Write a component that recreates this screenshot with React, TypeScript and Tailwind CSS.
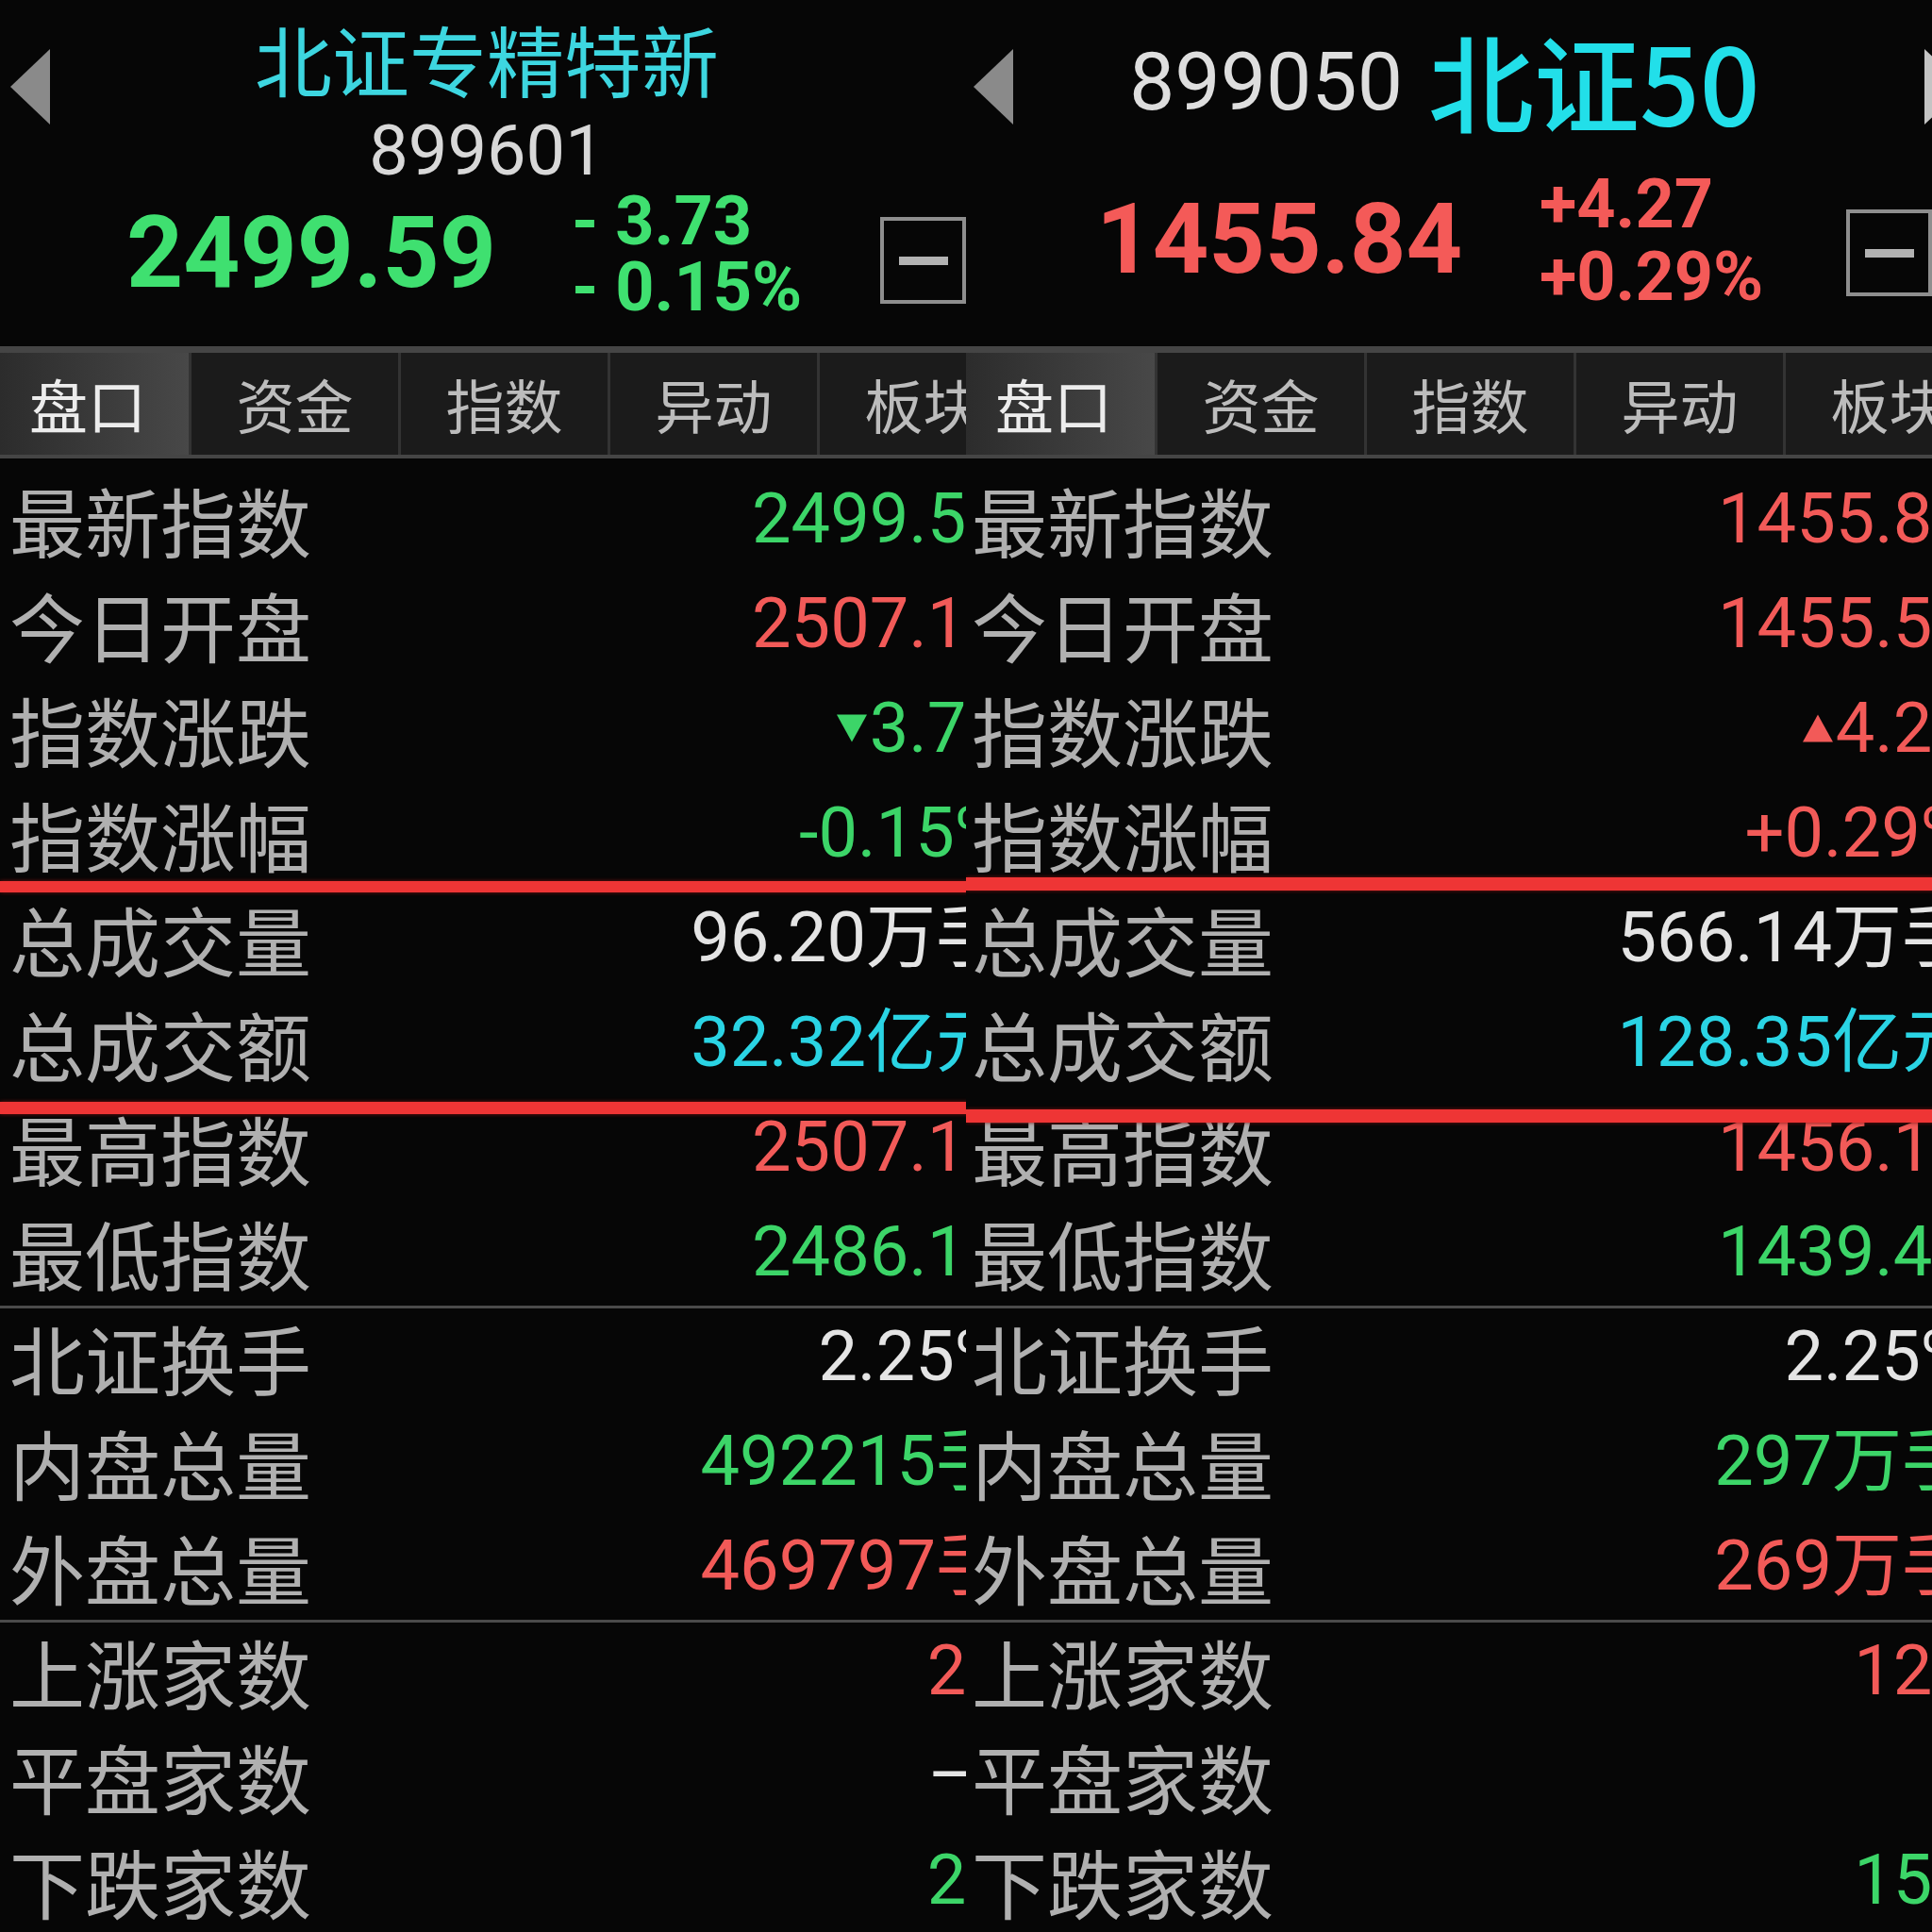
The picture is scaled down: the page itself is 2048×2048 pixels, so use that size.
import React from "react"

const cjk = "font-['Noto_Sans_CJK_SC',sans-serif]"
const num = "font-['Roboto','Noto_Sans_CJK_SC',sans-serif]"

const GREEN = "text-[#3cd568]"
const RED = "text-[#f25a58]"
const CYAN = "text-[#2ad4e4]"
const WHITE = "text-[#e4e4e4]"

type Row = { label: string; value: string; color: string; arrow?: "up" | "down"; extra?: string }

const leftRows: Row[] = [
  { label: "最新指数", value: "2499.59", color: GREEN },
  { label: "今日开盘", value: "2507.18", color: RED },
  { label: "指数涨跌", value: "3.73", color: GREEN, arrow: "down" },
  { label: "指数涨幅", value: "-0.15%", color: GREEN },
  { label: "总成交量", value: "96.20万手", color: WHITE },
  { label: "总成交额", value: "32.32亿元", color: CYAN },
  { label: "最高指数", value: "2507.18", color: RED },
  { label: "最低指数", value: "2486.13", color: GREEN },
  { label: "北证换手", value: "2.25%", color: WHITE },
  { label: "内盘总量", value: "492215手", color: GREEN },
  { label: "外盘总量", value: "469797手", color: RED },
  { label: "上涨家数", value: "21", color: RED },
  { label: "平盘家数", value: "—", color: WHITE, extra: "pr-[24px]" },
  { label: "下跌家数", value: "27", color: GREEN },
]

const rightRows: Row[] = [
  { label: "最新指数", value: "1455.84", color: RED },
  { label: "今日开盘", value: "1455.57", color: RED },
  { label: "指数涨跌", value: "4.27", color: RED, arrow: "up" },
  { label: "指数涨幅", value: "+0.29%", color: RED },
  { label: "总成交量", value: "566.14万手", color: WHITE },
  { label: "总成交额", value: "128.35亿元", color: CYAN },
  { label: "最高指数", value: "1456.12", color: RED },
  { label: "最低指数", value: "1439.46", color: GREEN },
  { label: "北证换手", value: "2.25%", color: WHITE },
  { label: "内盘总量", value: "297万手", color: GREEN },
  { label: "外盘总量", value: "269万手", color: RED },
  { label: "上涨家数", value: "123", color: RED },
  { label: "平盘家数", value: "8", color: WHITE },
  { label: "下跌家数", value: "152", color: GREEN },
]

const ArrowLeft = () => (
  <svg width="42" height="80" viewBox="0 0 42 80">
    <path d="M42 0 V80 L0 40 Z" fill="#8a8a8a" />
  </svg>
)

const ArrowRight = () => (
  <svg width="42" height="80" viewBox="0 0 42 80">
    <path d="M0 0 V80 L42 40 Z" fill="#c4c4c4" />
  </svg>
)

const Tri = ({ dir }: { dir: "up" | "down" }) => (
  <svg width="32" height="30" viewBox="0 0 10 9" className="mr-[3px] fill-current">
    {dir === "down" ? <path d="M0 0 H10 L5 9 Z" /> : <path d="M0 9 H10 L5 0 Z" />}
  </svg>
)

const MinusBox = ({ cls }: { cls: string }) => (
  <div className={`ml-auto w-[91px] h-[92px] border-[4px] border-[#8e8e8e] flex items-center justify-center ${cls}`}>
    <div className="w-[52px] h-[9px] bg-[#b2b2b2]" />
  </div>
)

function LeftHeader() {
  return (
    <div className="h-[372px] flex flex-col">
      <div className="flex h-[197px]">
        <div className="w-[64px] pl-[11px] pt-[52px]">
          <ArrowLeft />
        </div>
        <div className="flex-1 flex flex-col items-center pr-[56px] pt-[21px]">
          <div className={`text-[82px] leading-none text-[#3dd6e0] ${cjk}`}>北证专精特新</div>
          <div className={`mt-[20px] text-[74px] leading-none text-[#d8d8d8] ${num}`}>899601</div>
        </div>
      </div>
      <div className="flex items-start">
        <div className="w-[606px] pl-[134px] pt-[19px]">
          <span className={`text-[105px] leading-none font-bold text-[#3fe070] ${num}`}>2499.59</span>
        </div>
        <div className={`pt-[3px] text-[72px] leading-[70px] font-bold text-[#3fe070] whitespace-pre ${num}`}>
          <div>- 3.73</div>
          <div>- 0.15%</div>
        </div>
        <MinusBox cls="mt-[33px]" />
      </div>
    </div>
  )
}

function RightHeader() {
  return (
    <div className="h-[372px] flex flex-col">
      <div className="flex items-start h-[133px]">
        <div className="w-[173px] pl-[8px] pt-[52px]">
          <ArrowLeft />
        </div>
        <div className={`mt-[44px] text-[86px] leading-none text-[#dedede] ${num}`}>899050</div>
        <div className={`ml-[27px] mt-[28px] text-[112px] leading-none font-medium text-[#22dfe9] ${cjk}`}>北证50</div>
        <div className="ml-auto -mr-[34px] mt-[52px]">
          <ArrowRight />
        </div>
      </div>
      <div className="flex items-start">
        <div className="w-[608px] pl-[138px] pt-[69px]">
          <span className={`text-[104px] leading-none font-bold text-[#f45a58] ${num}`}>1455.84</span>
        </div>
        <div className={`pt-[45px] text-[72px] leading-[77px] font-bold text-[#f45a58] ${num}`}>
          <div>+4.27</div>
          <div>+0.29%</div>
        </div>
        <MinusBox cls="mt-[89px]" />
      </div>
    </div>
  )
}

const tabs = ["盘口", "资金", "指数", "异动", "板块"]

function TabBar() {
  return (
    <div className="h-[120px] border-t-[7px] border-b-[4px] border-[#454545] bg-[#1b1b1b] flex">
      {tabs.map((t, i) => (
        <div
          key={t}
          className={
            i === 0
              ? `w-[200px] shrink-0 flex items-center justify-center pr-[14px] bg-linear-to-r from-[#2c2c2c] to-[#484848] text-[62px] leading-none text-[#ececec] ${cjk}`
              : `w-[222px] shrink-0 flex items-center justify-center border-l-[3px] border-[#333333] text-[62px] leading-none text-[#bcbcbc] ${cjk}`
          }
        >
          {t}
        </div>
      ))}
    </div>
  )
}

function DataRow({ row, pad }: { row: Row; pad: string }) {
  return (
    <div className={`h-[111px] w-[1066px] shrink-0 flex items-center justify-between ${pad}`}>
      <span className={`text-[80px] leading-none text-[#b0b0b0] ${cjk}`}>{row.label}</span>
      <span className={`flex items-center text-[74px] leading-none ${num} ${row.color} ${row.extra ?? ""}`}>
        {row.arrow && <Tri dir={row.arrow} />}
        {row.value}
      </span>
    </div>
  )
}

function Mark({ cls }: { cls: string }) {
  return (
    <div className="relative h-0">
      <div className={`absolute left-0 w-[1066px] z-10 bg-[#ee3535] shadow-[0_0_4px_#7a1010] ${cls}`} />
    </div>
  )
}

function Rule() {
  return (
    <div className="relative h-0">
      <div className="absolute left-0 top-[2px] w-[1066px] h-[3px] bg-[#4a4a4a]" />
    </div>
  )
}

function Panel({
  header,
  rows,
  pad,
  markTop,
  markBottom,
}: {
  header: React.ReactNode
  rows: Row[]
  pad: string
  markTop: string
  markBottom: string
}) {
  const r = (list: Row[]) => list.map((row) => <DataRow key={row.label} row={row} pad={pad} />)
  return (
    <div className="w-[1024px] h-[2048px] shrink-0 overflow-hidden flex flex-col">
      {header}
      <TabBar />
      <div className="pt-[8px] flex flex-col">
        {r(rows.slice(0, 4))}
        <Mark cls={markTop} />
        {r(rows.slice(4, 6))}
        <Mark cls={markBottom} />
        {r(rows.slice(6, 8))}
        <Rule />
        {r(rows.slice(8, 11))}
        <Rule />
        {r(rows.slice(11))}
      </div>
    </div>
  )
}

export default function App() {
  return (
    <div className="w-[2048px] h-[2048px] bg-[#060606] flex overflow-hidden">
      <Panel
        header={<LeftHeader />}
        rows={leftRows}
        pad="pl-[10px]"
        markTop="top-[-4px] h-[12px]"
        markBottom="top-[8px] h-[13px]"
      />
      <Panel
        header={<RightHeader />}
        rows={rightRows}
        pad="pl-[6px]"
        markTop="top-[-8px] h-[14px]"
        markBottom="top-[16px] h-[14px]"
      />
    </div>
  )
}
